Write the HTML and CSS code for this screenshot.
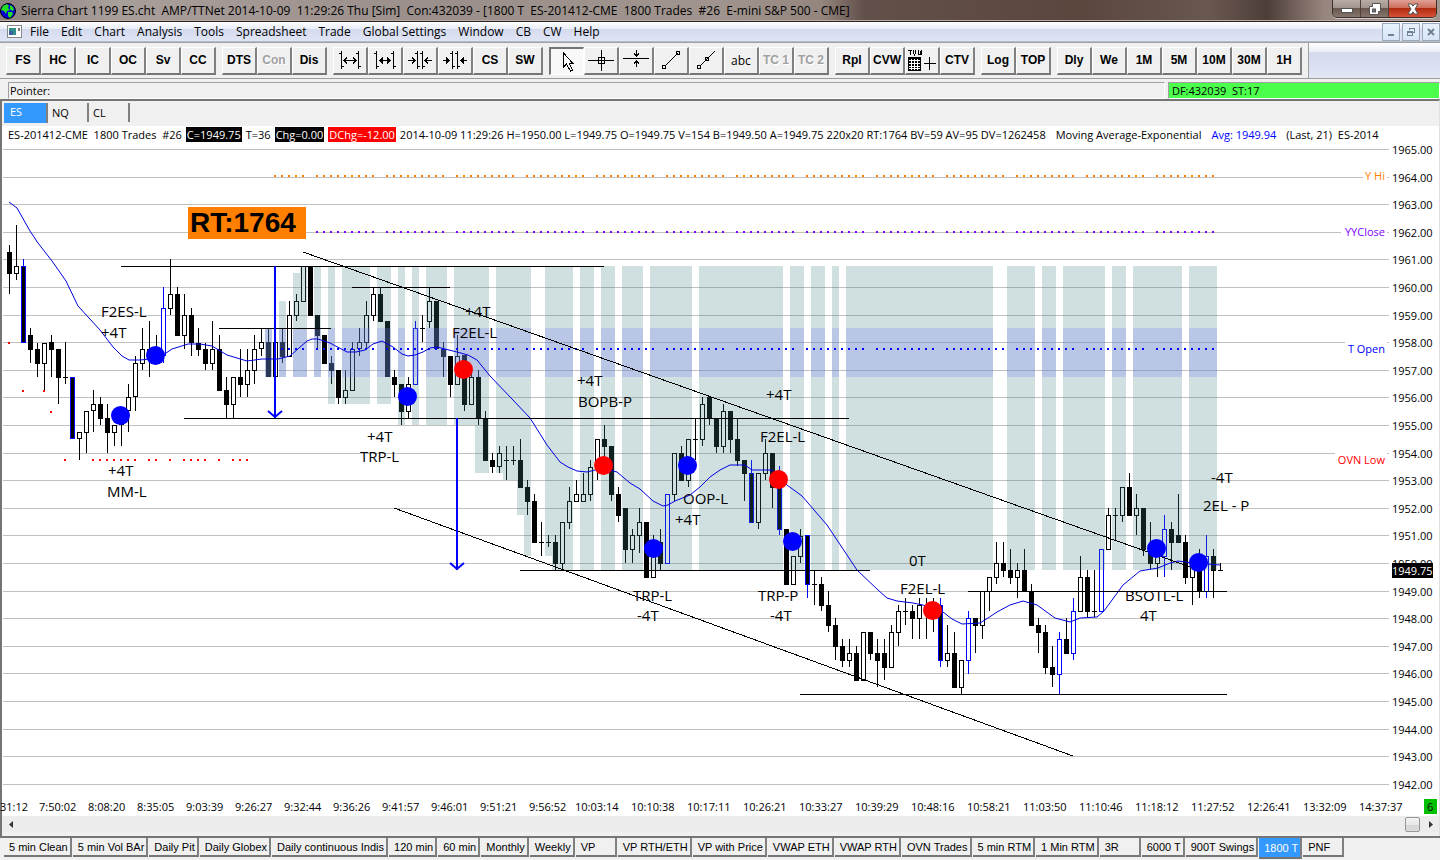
FILE: index.html
```html
<!DOCTYPE html>
<html lang="en">
<head>
  <meta charset="UTF-8" />
  <meta name="viewport" content="width=device-width, initial-scale=1.0"/>
  <title>Sierra Chart 1199 ES.cht</title>
  <link rel="stylesheet" href="styles.css">
</head>
<body>
  <header class="titlebar">
    <svg class="globe" width="16" height="16" viewBox="0 0 16 16">
      <circle cx="8" cy="8" r="7.5" fill="#0000d8" stroke="#000"/>
      <path d="M3 3l4-2 2 2-1 2 2 2-3 1-1 3-2-3-3-1zM10 2l3 2 1 3-2 1-2-2zM8 9l4 0 1 2-3 4-2-2z" fill="#20e020"/>
    </svg>
    <span class="title">Sierra Chart 1199 ES.cht&nbsp; AMP/TTNet 2014-10-09&nbsp; 11:29:26 Thu [Sim]&nbsp; Con:432039 - [1800 T&nbsp; ES-201412-CME&nbsp; 1800 Trades&nbsp; #26&nbsp; E-mini S&amp;P 500 - CME]</span>
    <div class="win-buttons">
      <button aria-label="Minimize"><svg width="12" height="12" viewBox="0 0 12 12"><rect x=".5" y="5.5" width="11" height="4" fill="#fff" stroke="#555"/></svg></button>
      <button aria-label="Restore"><svg width="12" height="12" viewBox="0 0 12 12"><path d="M3.500 .5h8v8h-2v3h-9v-8h3z" fill="#fff" stroke="#555"/><rect x="3.500" y="6" width="3" height="3" fill="#777" stroke="#555"/></svg></button>
      <button class="close" aria-label="Close"><svg width="12" height="12" viewBox="0 0 12 12"><path d="M1 1h3.500L6 3.200 7.500 1H11L8 6l3 5H7.500L6 8.800 4.500 11H1l3-5z" fill="#fff" stroke="#555"/></svg></button>
    </div>
  </header>

  <nav class="menubar">
    <svg class="doc-icon" width="15" height="13" viewBox="0 0 15 13" shape-rendering="crispEdges">
      <rect x=".5" y=".5" width="14" height="12" fill="#fff" stroke="#8a8a8a"/>
      <rect x="2" y="3" width="7" height="7" fill="#2f8f86"/><rect x="2" y="6" width="4" height="4" fill="#3a5fa8"/>
      <rect x="11" y="3" width="2" height="3" fill="#777"/>
    </svg>
    <a href="#">File</a><a href="#">Edit</a><a href="#">Chart</a><a href="#">Analysis</a><a href="#">Tools</a><a href="#">Spreadsheet</a><a href="#">Trade</a><a href="#">Global Settings</a><a href="#">Window</a><a href="#">CB</a><a href="#">CW</a><a href="#">Help</a>
    <div class="mdi-buttons">
      <button aria-label="Minimize chart"><svg width="10" height="10" viewBox="0 0 10 10"><rect x="2" y="7" width="6" height="2" fill="#71818f"/></svg></button>
      <button aria-label="Restore chart"><svg width="10" height="10" viewBox="0 0 10 10" fill="none" stroke="#71818f" shape-rendering="crispEdges"><path d="M3.500 3V1.500h5v4H7M3 1.500h6M1.500 4.500h5v4h-5zM1 5.500h6"/></svg></button>
      <button aria-label="Close chart"><svg width="10" height="10" viewBox="0 0 10 10"><path d="M2 2l6 6M8 2L2 8" stroke="#71818f" stroke-width="2"/></svg></button>
    </div>
  </nav>

  <div class="toolbar">
    <div class="tools">
      <div class="group">
        <button>FS</button><button>HC</button><button>IC</button><button>OC</button><button>Sv</button><button>CC</button>
      </div>
      <div class="group">
        <button>DTS</button><button disabled>Con</button><button>Dis</button>
      </div>
      <div class="group">
        <button aria-label="Widen bar spacing"><svg width="24" height="22" viewBox="0 0 24 22"><path d="M3.500 2v18M20.500 2v18M1 4.500h3M20 17.500h3M3 17.500h3M18 4.500h3M6 11.500h12M9 8.500l-3 3 3 3M15 8.500l3 3-3 3"/></svg></button>
        <button aria-label="Widen bars"><svg width="24" height="22" viewBox="0 0 24 22"><path d="M3.500 2v18M20.500 2v18M1 4.500h3M20 17.500h3M3 17.500h3M18 4.500h3M6 11.500h12"/><path d="M9.500 8v7M8.500 9v5M14.500 8v7M15.500 9v5M7.500 10v3M16.500 10v3"/></svg></button>
        <button aria-label="Narrow bar spacing"><svg width="24" height="22" viewBox="0 0 24 22"><path d="M9.500 2v18M14.500 2v18M7 4.500h3M9 17.500h3M12 4.500h3M14 17.500h3M0 11.500h7M4 8.500l3 3-3 3M24 11.500h-7M20 8.500l-3 3 3 3"/></svg></button>
        <button aria-label="Narrow bars"><svg width="24" height="22" viewBox="0 0 24 22"><path d="M9.500 2v18M14.500 2v18M7 4.500h3M9 17.500h3M12 4.500h3M14 17.500h3M0 11.500h7M24 11.500h-7"/><path d="M3.500 8v7M4.500 9v5M5.500 10v3M20.500 8v7M19.500 9v5M18.500 10v3"/></svg></button>
        <button>CS</button><button>SW</button>
      </div>
      <div class="group">
        <button class="pressed" aria-label="Pointer"><svg width="26" height="26" viewBox="0 0 26 26"><path d="M9.500 5v14l3-3 4 7 2-1-3.500-7h3.500z" fill="#fff"/></svg></button>
        <button aria-label="Crosshair"><svg width="26" height="22" viewBox="0 0 26 22"><path d="M0 11.500h26M13.500 1v21M10.500 8.500h6v6h-6z"/></svg></button>
        <button aria-label="Horizontal line"><svg width="26" height="22" viewBox="0 0 26 22"><path d="M0 9.500h26M13.500 1v6M11 4.500l2.500 2.500 2.500-2.500M13.500 18v-6M11 14.500l2.500-2.500 2.500 2.500"/></svg></button>
        <button aria-label="Line"><svg width="22" height="22" viewBox="0 0 22 22"><path d="M4.500 17.500l13-13M2.500 16.500h3v3h-3zM16.500 2.500h3v3h-3z"/></svg></button>
        <button aria-label="Ray"><svg width="22" height="22" viewBox="0 0 22 22"><path d="M4.500 17.500L20 2M2.500 16.500h3v3h-3zM10.500 8.500h3v3h-3z"/></svg></button>
        <button class="plain">abc</button><button disabled>TC 1</button><button disabled>TC 2</button>
      </div>
      <div class="group">
        <button>Rpl</button><button>CVW</button>
        <button aria-label="Values window"><svg width="30" height="24" viewBox="0 -2 30 24"><path d="M1 .5h4M3.500 1v4M6.500 0v3l1 2 1-2V0M11.500 0v4.500h3V0M13.500 1v4M17 13.500h12M22.500 7v13"/><rect x="1" y="7" width="13" height="14" fill="#000" stroke="none"/><path stroke="#fff" d="M2 10.500h11M2 13.500h11M2 16.500h11M2 18.500h11M4.500 9v11M7.500 9v11M10.500 9v11"/></svg></button>
        <button>CTV</button>
      </div>
      <div class="group"><button>Log</button><button>TOP</button></div>
      <div class="group">
        <button>Dly</button><button>We</button><button>1M</button><button>5M</button><button>10M</button><button>30M</button><button>1H</button>
      </div>
    </div>
  </div>

  <div class="status">
    <div class="pointer">Pointer:</div>
    <div class="feed">DF:432039&nbsp; ST:17</div>
  </div>

  <main class="workspace">
    <div class="symbol-tabs">
      <button class="active">ES</button><button>NQ</button><button>CL</button>
    </div>
    <div class="readout">
      <span>ES-201412-CME&nbsp; 1800 Trades&nbsp; #26</span>
      <span class="chip">C=1949.75</span>
      <span>T=36</span>
      <span class="chip">Chg=0.00</span>
      <span class="chip red">DChg=-12.00</span>
      <span>2014-10-09 11:29:26 H=1950.00 L=1949.75 O=1949.75 V=154 B=1949.50 A=1949.75 220x20 RT:1764 BV=59 AV=95 DV=1262458</span>
      <span class="study">Moving Average-Exponential</span>
      <span class="study avg">Avg: 1949.94</span>
      <span class="study">(Last, 21)&nbsp; ES-2014</span>
    </div>
    <svg class="chart" id="chart" viewBox="2 143 1437 673" preserveAspectRatio="xMinYMin meet"></svg>
    <div class="scrollbar">
      <button aria-label="Scroll left"><svg width="5" height="8" viewBox="0 0 5 8"><path d="M4 0v7L0 3.500z" fill="#333"/></svg></button>
      <button class="thumb" aria-label="Scroll position"></button>
      <button aria-label="Scroll right"><svg width="5" height="8" viewBox="0 0 5 8"><path d="M1 0v7l4-3.500z" fill="#333"/></svg></button>
    </div>
  </main>

  <footer class="chartbook">
    <button>5 min Clean</button><button>5 min Vol BAr</button><button>Daily Pit</button><button>Daily Globex</button><button>Daily continuous Indis</button><button>120 min</button><button>60 min</button><button>Monthly</button><button>Weekly</button><button>VP</button><button>VP RTH/ETH</button><button>VP with Price</button><button>VWAP ETH</button><button>VWAP RTH</button><button>OVN Trades</button><button>5 min RTM</button><button>1 Min RTM</button><button>3R</button><button>6000 T</button><button>900T Swings</button><button class="active">1800 T</button><button>PNF</button>
  </footer>

  <script src="chart.js"></script>
</body>
</html>
```
FILE: styles.css
```css
* {
  box-sizing: border-box;
}
body {
  margin: 0;
  min-height: 100vh;
  display: flex;
  flex-direction: column;
  background: #f0f0f0;
  color: #000;
  font-family: "Open Sans", "Noto Sans", sans-serif;
  font-size: 12px;
  overflow: hidden;
}
button {
  margin: 0;
  padding: 0;
  border: none;
  background: #f0f0f0;
  color: #000;
  font: inherit;
}
.titlebar {
  display: flex;
  height: 22px;
  border-bottom: 1px solid #2c2422;
  box-shadow: inset 0 -1px #b5aaa5;
  background: linear-gradient(to right, #8d8280 0%, #a89e9a 8%, #9b8f8b 30%, #a0948e 50%, #94867e 57%, #62504a 60%, #5b463e 75%, #685850 84%, #4e3e38 88%, #97877f 92%, #a39890 100%);
}
.globe {
  margin: 3px 5px 0 0;
}
.title {
  line-height: 21px;
  white-space: nowrap;
}
.win-buttons {
  display: flex;
  height: 18px;
  margin: 0 3px 0 auto;
  border: 1px solid #3c302c;
  border-top: none;
  border-radius: 0 0 5px 5px;
  overflow: hidden;
  box-shadow: 0 1px #d0c8c4;
}
.win-buttons button {
  width: 28px;
  display: flex;
  align-items: center;
  justify-content: center;
  border-right: 1px solid #4c403c;
  background: linear-gradient(#b8aca6, #a0928a 50%, #6a5850 50%, #85756c);
}
.win-buttons .close {
  width: 47px;
  border-right: none;
  background: linear-gradient(#dfa195, #cc6a55 50%, #b02c10 50%, #d85038);
}
.menubar {
  display: flex;
  align-items: center;
  height: 20px;
  padding-left: 7px;
  gap: 12px;
  border-bottom: 1px solid #b4bccb;
  background: linear-gradient(#fff, #e9edf7 35%, #d5dbee 38%, #dfe5f5);
}
.menubar a {
  color: #000;
  text-decoration: none;
  line-height: 18px;
}
.doc-icon {
  margin-right: -4px;
}
.mdi-buttons {
  display: flex;
  gap: 2px;
  margin-left: auto;
}
.mdi-buttons button {
  width: 18px;
  height: 18px;
  border: 1px solid #9aaabb;
  background: linear-gradient(#e8f1fb, #d5e5f7);
}
.toolbar {
  height: 37px;
  border-top: 1px solid #a0a0a0;
  border-bottom: 1px solid #9c9c9c;
  background: linear-gradient(#fff, #e9edf7 25%, #d3d9ec 28%, #e2e7f5);
}
.tools {
  display: flex;
  gap: 6px;
  width: fit-content;
  height: 35px;
  padding: 4px 6px 0 6px;
  border-right: 1px solid #a0a0a0;
  background: #f0f0f0;
}
.group {
  display: flex;
}
.group button {
  display: flex;
  align-items: center;
  justify-content: center;
  width: 35px;
  height: 28px;
  padding-bottom: 1px;
  border-style: solid;
  border-width: 1px 2px 2px 1px;
  border-color: #fff #808080 #757575 #fff;
  font-family: "Liberation Sans", Arial, sans-serif;
  font-size: 12px;
  font-weight: bold;
}
.group button:disabled {
  color: #a0a0a0;
  text-shadow: 1px 1px #fff;
}
.group .plain {
  font-family: "Open Sans", sans-serif;
  font-size: 12px;
  font-weight: normal;
}
.group .pressed {
  border-width: 2px 1px 1px 2px;
  border-color: #757575 #fff #fff #757575;
  background: #f8f8f8;
}
.group svg {
  flex: none;
  fill: none;
  stroke: #000;
  shape-rendering: crispEdges;
}
.status {
  display: flex;
  gap: 3px;
  height: 20px;
  padding: 3px 0 0 8px;
  font-size: 11px;
  line-height: 15px;
}
.status div {
  height: 17px;
  padding-left: 1px;
  border: 1px solid #fff;
  border-top-color: #a0a0a0;
  border-left-color: #a0a0a0;
}
.status .pointer {
  flex: 1;
}
.status .feed {
  width: 19%;
  padding-left: 3px;
  background: #4cff4c;
}
.workspace {
  flex: 1;
  display: flex;
  flex-direction: column;
  border-top: 2px solid #757575;
  border-left: 2px solid #757575;
  border-right: 1px solid #e0e0e0;
}
.symbol-tabs {
  display: flex;
  height: 25px;
  padding: 2px 0 0 2px;
}
.symbol-tabs button {
  width: 41px;
  height: 19px;
  padding-left: 4px;
  border-right: 2px solid #808080;
  text-align: left;
  line-height: 18px;
  font-size: 11px;
}
.symbol-tabs .active {
  width: 44px;
  height: 20px;
  padding: 0 0 4px 6px;
  background: #3399ff;
  color: #fff;
  line-height: 15px;
}
.readout {
  display: flex;
  align-items: center;
  gap: 4px;
  height: 17px;
  padding-left: 6px;
  background: #fff;
  font-size: 11px;
  line-height: 15px;
  white-space: nowrap;
}
.chip {
  padding: 0 1px;
  background: #000;
  color: #fff;
}
.chip.red {
  background: #f00;
}
.study {
  margin-left: 6px;
}
.avg {
  color: #00f;
}
.chart {
  display: block;
  width: 100%;
  background: #fff;
  overflow: visible;
}
.chart text {
  font-family: "Open Sans", "Noto Sans", sans-serif;
  font-size: 11px;
}
.chart .note {
  font-size: 15px;
}
.chart .volume {
  font-family: "Liberation Sans", Arial, sans-serif;
  font-size: 28px;
  font-weight: bold;
}
.scrollbar {
  display: flex;
  align-items: center;
  height: 16px;
  padding: 0 5px;
  background: #ececec;
}
.scrollbar button {
  width: 8px;
  background: none;
}
.scrollbar .thumb {
  width: 15px;
  height: 15px;
  margin: 0 6px 0 auto;
  border: 1px solid #979797;
  border-radius: 2px;
  background: linear-gradient(#f4f4f4, #e8e8e8 50%, #d4d4d4 50%, #dcdcdc);
}
.chartbook {
  display: flex;
  height: 24px;
  padding-left: 4px;
  gap: 1px;
  border-top: 2px solid #757575;
}
.chartbook button {
  min-width: 41px;
  height: 19px;
  padding: 0 2px 0 5px;
  border-style: solid;
  border-width: 0 2px 2px 0;
  border-color: #fff #808080 #757575 #fff;
  font-family: "Liberation Sans", Arial, sans-serif;
  font-size: 11px;
  text-align: left;
  white-space: nowrap;
}
.chartbook .active {
  height: 21px;
  border-color: #3399ff #808080 #757575 #3399ff;
  background: #3399ff;
  color: #fff;
}
```
FILE: chart.js
```js
const svg = document.getElementById('chart');
const parts = [];

function line(x1, y1, x2, y2, color, width) {
  parts.push(`<line x1="${x1}" y1="${y1}" x2="${x2}" y2="${y2}" stroke="${color || '#000'}" stroke-width="${width || 1}" shape-rendering="crispEdges"/>`);
}
function rect(x, y, w, h, fill, stroke) {
  parts.push(`<rect x="${x}" y="${y}" width="${w}" height="${h}" fill="${fill}" stroke="${stroke || 'none'}" shape-rendering="crispEdges"/>`);
}
function text(x, y, str, attrs) {
  parts.push(`<text x="${x}" y="${y}" ${attrs || ''}>${str}</text>`);
}

// price grid
for (let i = 0; i < 24; i++) {
  const y = Math.floor(149.5 + i * 27.6) + 0.5;
  line(3, y, 1389, y, '#c0c0c0');
  text(1392, y + 4, (1965 - i).toFixed(2));
}

// bars: high, body top, body bottom, low, type
// d = down, u = up, b = down (blue), v = up (blue), t = flat
const bars = `
245 252 274 294 d|225 266 274 280 u|259 266 343 343 b|328 335 350 363 d|343 349 364 377 d|343 343 364 390 u
335 342 350 377 d|349 349 378 404 d|342 377 377 384 t|377 377 439 439 b|432 432 439 460 u|411 411 433 453 u
390 404 411 432 u|397 404 419 425 d|404 418 433 453 d|425 425 433 446 u|411 418 425 446 u|384 397 411 432 u
356 363 397 411 u|328 349 364 370 u|321 349 357 377 d|335 347 360 363 u|287 308 356 363 v|259 294 309 315 u
287 294 336 336 d|294 315 336 349 u|308 315 343 356 d|328 343 350 356 d|343 349 364 370 d|321 349 364 370 u
335 349 391 391 d|377 390 405 418 d|377 377 405 418 u|349 377 385 397 d|349 370 385 397 u|335 349 371 384 u
328 342 349 356 u|328 342 377 377 d|342 342 377 377 u|328 342 357 363 d|301 315 357 357 u|294 301 316 321 u
266 266 302 302 u|266 266 316 316 d|315 315 336 349 d|335 335 364 364 d|356 363 371 384 d|370 370 398 404 d
370 390 398 404 u|342 349 391 391 u|328 342 349 356 u|301 315 343 349 u|288 294 316 321 u|288 294 322 322 d
321 321 377 377 d|370 377 385 397 d|384 384 412 425 d|377 384 412 418 u|321 328 385 385 v|315 328 328 342 t
288 301 322 328 u|301 301 349 349 d|342 349 357 377 d|356 356 385 397 d|335 356 385 385 u|355 355 405 411 d
370 377 405 405 u|370 377 419 425 d|411 418 461 461 d|453 460 467 473 d|446 453 467 473 u|446 460 460 480 t
446 460 460 465 t|439 460 488 488 d|480 487 502 515 d|494 501 543 543 d|522 542 542 556 t|535 542 542 547 t
535 542 564 570 d|522 522 564 570 u|487 501 523 529 u|480 494 502 502 u|473 494 502 502 u|460 467 495 501 u
439 439 467 480 u|425 439 447 467 d|446 446 495 501 d|487 494 516 522 d|508 508 550 563 d|529 535 550 563 u
508 522 536 553 u|522 522 578 578 d|535 542 578 578 u|529 542 564 570 d|494 494 564 564 v|453 453 495 501 u
446 453 481 481 d|439 439 481 487 u|418 439 439 460 t|397 404 440 446 u|397 397 419 425 d|418 418 447 453 d
404 411 447 453 u|411 411 440 453 d|418 439 461 466 d|460 460 474 501 d|460 473 523 523 b|473 473 523 529 u
439 453 474 480 u|453 453 488 508 d|466 480 530 535 b|529 529 585 585 d|556 556 585 585 u|529 536 557 563 u
535 535 585 598 b|571 584 584 605 t|577 584 606 611 d|591 605 626 632 d|618 625 647 660 d|639 646 661 667 d
639 653 661 667 u|646 653 681 681 d|632 632 681 681 u|632 632 654 660 d|639 653 661 687 d|639 653 668 680 d
625 632 668 668 u|605 611 633 646 u|598 611 611 625 t|605 611 619 639 d|598 605 619 639 u|598 610 610 639 t
598 610 610 632 t|598 605 661 667 b|625 653 661 667 u|632 653 688 688 d|660 660 688 694 u|611 618 661 674 v
618 618 626 653 d|591 591 626 639 u|577 577 592 611 u|542 563 578 584 u|542 563 571 577 d|549 570 578 584 d
563 570 578 598 u|549 570 592 592 d|584 591 626 626 d|618 625 633 653 d|625 632 668 674 d|646 667 675 687 d
632 639 675 694 v|618 639 654 654 d|598 611 654 660 v|556 577 612 612 u|570 577 612 617 d|570 611 611 617 t
549 549 612 612 v|508 515 550 550 u|508 515 515 541 t|487 487 516 522 u|473 487 516 516 d|494 508 516 535 u
508 508 550 556 d|522 549 564 569 d|540 556 564 577 u|515 529 557 577 v|522 529 543 570 d|494 535 543 543 d
535 542 578 584 d|557 563 578 605 u|549 563 592 598 d|535 556 592 598 v|549 556 571 598 d`.trim().split(/[|\n]/);

bars.forEach((bar, i) => {
  const [high, top, bottom, low, type] = bar.split(' ');
  const x = 9 + i * 7;
  const color = type === 'b' || type === 'v' ? '#00f' : '#000';
  line(x + 0.5, high, x + 0.5, low, color);
  if (type === 't') {
    line(x - 2, +top + 0.5, x + 3, +top + 0.5);
  } else {
    rect(x - 1.5, +top + 0.5, 4, bottom - top - 1, type === 'u' || type === 'v' ? '#fff' : '#000', color);
  }
});

// session shading: x1, x2, top, bottom
const teal = 'rgba(65,130,130,0.247)';
const blue = 'rgba(98,126,198,0.44)';
[
  [265, 272, 328, 377], [279, 286, 301, 377], [293, 300, 273, 377], [300, 307, 266, 377], [314, 321, 266, 377],
  [328, 335, 266, 404], [342, 370, 266, 404], [377, 391, 266, 404], [398, 405, 266, 425], [412, 419, 266, 425],
  [426, 447, 266, 425], [454, 475, 266, 425], [475, 489, 266, 473], [496, 503, 266, 473], [503, 517, 266, 480],
  [517, 524, 266, 515], [524, 531, 266, 556], [545, 552, 266, 556], [552, 573, 266, 570], [580, 594, 266, 570],
  [601, 615, 266, 570], [622, 643, 266, 570], [650, 692, 266, 570], [699, 783, 266, 570], [790, 804, 266, 570],
  [811, 825, 266, 570], [832, 839, 266, 570], [846, 993, 266, 570], [1007, 1035, 266, 570], [1042, 1056, 266, 570],
  [1063, 1105, 266, 570], [1112, 1126, 266, 570], [1133, 1182, 266, 570], [1189, 1217, 266, 570]
].forEach(([x1, x2, top, bottom]) => {
  rect(x1, top, x2 - x1, 328 - top, teal);
  rect(x1, 328, x2 - x1, 49, blue);
  rect(x1, 377, x2 - x1, bottom - 377, teal);
});

// reference levels, every tenth dot is skipped
function dots(from, y, color) {
  for (let x = from; x <= 1215; x += 7) {
    if ((x - 310) % 70 !== 0) rect(x - 1, y - 1, 2, 2, color);
  }
}
dots(275, 176, '#ff8000');
dots(317, 232, '#8000ff');
dots(282, 349, '#0000ff');
[[9, 342], [23, 390], [44, 390], [51, 411]].forEach(([x, y]) => rect(x - 1, y, 2, 2, '#f00'));
[65, 93, 100, 107, 114, 121, 128, 135, 149, 156, 170, 184, 191, 198, 205, 219, 233, 240, 247]
  .forEach(x => rect(x - 1, 459, 2, 2, '#f00'));

// moving average
parts.push(`<polyline fill="none" stroke="#0000e0" points="9,202 17,208 30,231 38,243 52,261 66,281 78,306 100,330 113,347
  122,356 129,360 140,360 150,359 163,355 172,349 188,344 200,344 212,346 227,355 247,361 262,359 278,359 290,356 299,348 307,341 312,339 318,339
  330,343 347,352 356,352 365,350 373,344 382,341 393,347 402,354 408,356 415,355 423,352 430,348 437,347 457,352 468,355 477,360 490,376 513,400
  530,418 547,445 560,462 568,467 577,471 587,472 603,468 617,472 630,483 640,489 653,501 663,506 668,505 675,501 690,495 700,487 710,477 720,470
  730,465 745,465 752,470 772,470 787,485 802,496 827,525 857,570 878,590 887,598 897,601 913,603 923,605 943,612 952,619 962,624 980,623
  988,618 997,612 1010,605 1023,601 1037,605 1055,618 1070,622 1080,618 1097,617 1104,611 1123,585 1140,571 1158,568 1170,563 1178,561 1193,563 1220,565"/>`);

// drawn lines
[[121, 604, 266], [219, 331, 328], [352, 450, 287], [184, 849, 418], [520, 870, 570], [968, 1227, 591], [800, 1227, 694]]
  .forEach(([x1, x2, y]) => line(x1, y + 0.5, x2, y + 0.5));
line(303, 252, 1193, 568);
line(394, 508, 1073, 756);
line(1220.5, 563, 1220.5, 570);
line(1218, 570.5, 1223, 570.5);

[[275, 266, 418], [457, 418, 570]].forEach(([x, top, bottom]) => {
  line(x, top, x, bottom, '#00f', 2);
  parts.push(`<path d="M${x - 7} ${bottom - 7}l7 6 7-6" fill="none" stroke="#00f" stroke-width="2"/>`);
});

// signals
[[120, 415], [155, 355], [407, 396], [653, 548], [687, 465], [792, 541], [1156, 548], [1198, 562]]
  .forEach(([x, y]) => parts.push(`<circle cx="${x + 0.5}" cy="${y + 0.5}" r="9.5" fill="#00f"/>`));
[[463, 369], [603, 465], [778, 479], [932, 610]]
  .forEach(([x, y]) => parts.push(`<circle cx="${x + 0.5}" cy="${y + 0.5}" r="9.5" fill="#f00"/>`));

[
  [101, 317, 'F2ES-L'], [101, 338, '+4T'], [108, 476, '+4T'], [107, 497, 'MM-L'], [367, 442, '+4T'], [360, 462, 'TRP-L'],
  [465, 317, '+4T'], [452, 338, 'F2EL-L'], [577, 386, '+4T'], [578, 407, 'BOPB-P'], [766, 400, '+4T'], [760, 442, 'F2EL-L'],
  [683, 504, 'OOP-L'], [675, 525, '+4T'], [633, 601, 'TRP-L'], [637, 621, '-4T'], [758, 601, 'TRP-P'], [770, 621, '-4T'],
  [909, 566, '0T'], [900, 594, 'F2EL-L'], [1125, 601, 'BSOTL-L'], [1140, 621, '4T'], [1211, 483, '-4T'], [1203, 511, '2EL - P']
].forEach(([x, y, str]) => text(x, y, str, 'class="note"'));

rect(188, 207, 118, 32, '#ff8000');
text(190, 232, 'RT:1764', 'class="volume"');

[['Y Hi', 176, 24, '#ff8000'], ['YYClose', 232, 46, '#8000ff'], ['T Open', 349, 42, '#0000ff'], ['OVN Low', 460, 52, '#ff0000']]
  .forEach(([str, y, w, color]) => {
    rect(1387 - w, y - 7, w, 14, '#fff');
    text(1385, y + 4, str, `text-anchor="end" fill="${color}"`);
  });

rect(1392, 563, 41, 15, '#000');
text(1392, 575, '1949.75', 'fill="#fff"');

// time scale
text(28, 811, '31:12', 'text-anchor="end"');
['7:50:02', '8:08:20', '8:35:05', '9:03:39', '9:26:27', '9:32:44', '9:36:26', '9:41:57', '9:46:01', '9:51:21', '9:56:52']
  .forEach((t, i) => text(39 + i * 49, 811, t));
['10:03:14', '10:10:38', '10:17:11', '10:26:21', '10:33:27', '10:39:29', '10:48:16', '10:58:21', '11:03:50', '11:10:46', '11:18:12', '11:27:52', '12:26:41', '13:32:09', '14:37:37']
  .forEach((t, i) => text(575 + i * 56, 811, t));
rect(1424, 799, 13, 15, '#00c000');
text(1427, 811, '6');

svg.innerHTML = parts.join('');
```
